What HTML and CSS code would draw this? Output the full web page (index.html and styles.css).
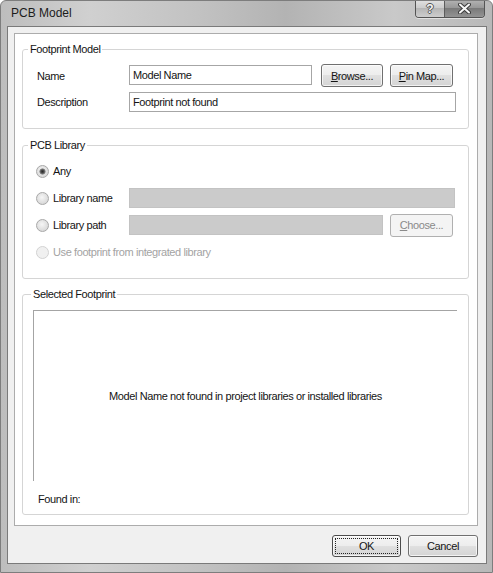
FILE: index.html
```html
<!DOCTYPE html>
<html lang="en">
<head>
    <meta charset="UTF-8">
    <title>PCB Model</title>
    <link rel="stylesheet" href="styles.css">
</head>
<body>
    <div class="window">
        <div class="titlebar">
            <span class="title">PCB Model</span>
            <div class="caption">
                <span class="cap-btn cap-help">?</span>
                <span class="cap-btn cap-close">
                    <svg width="13" height="11" viewBox="0 0 13 11">
                        <path d="M2 1.5 L11 9.5 M11 1.5 L2 9.5" stroke="#3c3c3c" stroke-width="4" stroke-linecap="round"/>
                        <path d="M2 1.5 L11 9.5 M11 1.5 L2 9.5" stroke="#f6f6f6" stroke-width="2" stroke-linecap="round"/>
                    </svg>
                </span>
            </div>
        </div>

        <div class="client">
            <div class="panel">
                <fieldset class="group">
                    <legend>Footprint Model</legend>
                    <div class="group-body footprint-body">
                        <div class="row">
                            <label class="label" for="fpName">Name</label>
                            <input class="field grow" id="fpName" type="text" value="Model Name">
                            <button class="btn btn-browse"><u>B</u>rowse...</button>
                            <button class="btn btn-pins"><u>P</u>in Map...</button>
                        </div>
                        <div class="row row-desc">
                            <label class="label" for="fpDesc">Description</label>
                            <input class="field grow" id="fpDesc" type="text" value="Footprint not found">
                        </div>
                    </div>
                </fieldset>

                <fieldset class="group group-lib">
                    <legend>PCB Library</legend>
                    <div class="group-body lib-body">
                        <div class="row">
                            <span class="option"><span class="radio checked"></span>Any</span>
                        </div>
                        <div class="row">
                            <span class="option"><span class="radio"></span>Library name</span>
                            <input class="field off grow" type="text" disabled>
                        </div>
                        <div class="row">
                            <span class="option"><span class="radio"></span>Library path</span>
                            <input class="field off grow" type="text" disabled>
                            <button class="btn btn-choose" disabled><u>C</u>hoose...</button>
                        </div>
                        <div class="row">
                            <span class="option disabled"><span class="radio"></span>Use footprint from integrated library</span>
                        </div>
                    </div>
                </fieldset>

                <fieldset class="group group-selected">
                    <legend>Selected Footprint</legend>
                    <div class="group-body selected-body">
                        <div class="preview">Model Name not found in project libraries or installed libraries</div>
                        <div class="found-in">Found in:</div>
                    </div>
                </fieldset>
            </div>

            <div class="actions">
                <button class="btn btn-ok">OK</button>
                <button class="btn btn-cancel">Cancel</button>
            </div>
        </div>
    </div>
</body>
</html>
```

FILE: styles.css
```css
* {
    box-sizing: border-box;
}

body {
    margin: 0;
    font-family: "Liberation Sans", Arial, sans-serif;
    font-size: 11px;
    letter-spacing: -0.4px;
    color: #141414;
}

.window {
    width: 493px;
    height: 573px;
    display: flex;
    flex-direction: column;
    background: linear-gradient(90deg, #bdbdbd, #d0d0d0 18%, #c2c2c2 40%, #b3b3b3 58%, #c9c9c9 80%, #b8b8b8);
    border: 1px solid #7d7d7d;
    border-radius: 6px 6px 0 0;
    overflow: hidden;
}

.titlebar {
    display: flex;
    align-items: flex-start;
    height: 25px;
    flex: none;
}

.title {
    font-size: 12px;
    letter-spacing: 0;
    line-height: 14px;
    margin: 5px 0 0 10px;
    color: #1c1c1c;
}

.caption {
    display: flex;
    margin: -1px 7px 0 auto;
    height: 18px;
    border: 1px solid #545454;
    border-top: none;
    border-radius: 0 0 4px 4px;
    overflow: hidden;
    box-shadow: 0 1px 0 rgba(255, 255, 255, 0.5);
}

.cap-btn {
    display: flex;
    align-items: center;
    justify-content: center;
}

.cap-help {
    width: 29px;
    border-right: 1px solid #5c5c5c;
    background: linear-gradient(#e2e2e2, #cacaca 50%, #b6b6b6 50%, #cdcdcd);
    color: #f4f4f4;
    font-weight: bold;
    font-size: 12px;
    letter-spacing: 0;
    text-shadow: 1px 0 0 #555, -1px 0 0 #555, 0 1px 0 #555, 0 -1px 0 #555;
}

.cap-close {
    width: 39px;
    background: linear-gradient(#b4b4b4, #959595 50%, #7a7a7a 50%, #939393);
}

.client {
    flex: 1;
    display: flex;
    flex-direction: column;
    margin: 0 5px 8px 6px;
    padding: 6px 8px 6px 6px;
    background-color: #f0f0f0;
    border: 1px solid #7a7a7a;
}

.panel {
    flex: 1;
    display: flex;
    flex-direction: column;
    background-color: #fff;
    border: 1px solid #acacac;
    padding: 9px 8px 10px 7px;
}

.group {
    margin: 0;
    padding: 0;
    min-width: 0;
    border: 1px solid #d5d5d5;
    border-radius: 3px;
}

.group legend {
    margin-left: 5px;
    padding: 0 2px;
    line-height: 13px;
}

.group-lib {
    margin-top: 10px;
}

.group-selected {
    margin-top: 9px;
    flex: 1;
    display: flex;
    flex-direction: column;
}

.group-selected legend {
    margin-left: 8px;
}

.group-body {
    display: flex;
    flex-direction: column;
}

.footprint-body {
    padding: 8px 12px 16px 14px;
    gap: 5px;
}

.lib-body {
    padding: 8px 13px 15px 13px;
    gap: 5px;
}

.row {
    display: flex;
    align-items: center;
    height: 22px;
    gap: 7px;
}

.footprint-body .row {
    height: 23px;
    align-items: flex-start;
}

.footprint-body .row-desc {
    height: 20px;
}

.label {
    width: 92px;
    flex: none;
    align-self: center;
    margin-right: -7px;
}

.field {
    height: 20px;
    border: 1px solid #a6a6a6;
    padding: 0 3px;
    font: inherit;
    letter-spacing: inherit;
    color: #141414;
    background-color: #fff;
    outline: none;
    min-width: 0;
}

.footprint-body .row:first-child .field {
    margin-top: 1px;
    margin-right: 1px;
}

.field.off {
    background-color: #cbcbcb;
    border-color: #c3c3c3;
}

.grow {
    flex: 1;
}

.option {
    display: flex;
    align-items: center;
    width: 93px;
    flex: none;
    margin-right: -7px;
    white-space: nowrap;
}

.option.disabled {
    color: #a3a3a3;
}

.radio {
    width: 13px;
    height: 13px;
    flex: none;
    margin-right: 4px;
    border-radius: 50%;
    border: 1px solid #a8a8a8;
    background: radial-gradient(circle at 45% 40%, #f6f6f6, #e2e2e2 50%, #cfcfcf);
}

.radio.checked {
    background:
        radial-gradient(circle at 50% 50%, #2a2a2a 0, #4c4c4c 1.6px, #8c8c8c 2.8px, transparent 3.4px),
        radial-gradient(circle at 45% 40%, #f6f6f6, #e2e2e2 50%, #cfcfcf);
}

.option.disabled .radio {
    border-color: #d2d2d2;
    background: #f0f0f0;
}

.btn {
    height: 23px;
    padding: 0;
    border: 1px solid #707070;
    border-radius: 3px;
    background: linear-gradient(#f4f4f4 0%, #ededed 49%, #e0e0e0 50%, #d4d4d4 100%);
    box-shadow: inset 0 0 0 1px rgba(255, 255, 255, 0.7);
    font: inherit;
    letter-spacing: inherit;
    color: #141414;
}

.btn-browse {
    width: 62px;
    margin-left: 1px;
}

.btn-pins {
    width: 63px;
    margin-right: 3px;
}

.btn-choose {
    width: 63px;
    margin-right: 2px;
}

.btn:disabled {
    border-color: #b0b0b0;
    background: #f4f4f4;
    box-shadow: none;
    color: #8a8a8a;
}

.selected-body {
    flex: 1;
    padding: 9px 11px 8px 10px;
}

.preview {
    flex: 1;
    display: flex;
    align-items: center;
    justify-content: center;
    border-top: 1px solid #a4a4a4;
    border-left: 1px solid #a4a4a4;
}

.found-in {
    margin: 11px 0 0 5px;
    line-height: 14px;
}

.actions {
    display: flex;
    justify-content: flex-end;
    gap: 7px;
    margin-top: 9px;
    height: 22px;
    flex: none;
}

.actions .btn {
    height: 22px;
}

.btn-ok {
    width: 69px;
    border-color: #4c4c4c;
    outline: 1px dotted #222;
    outline-offset: -4px;
}

.btn-cancel {
    width: 70px;
}
```
